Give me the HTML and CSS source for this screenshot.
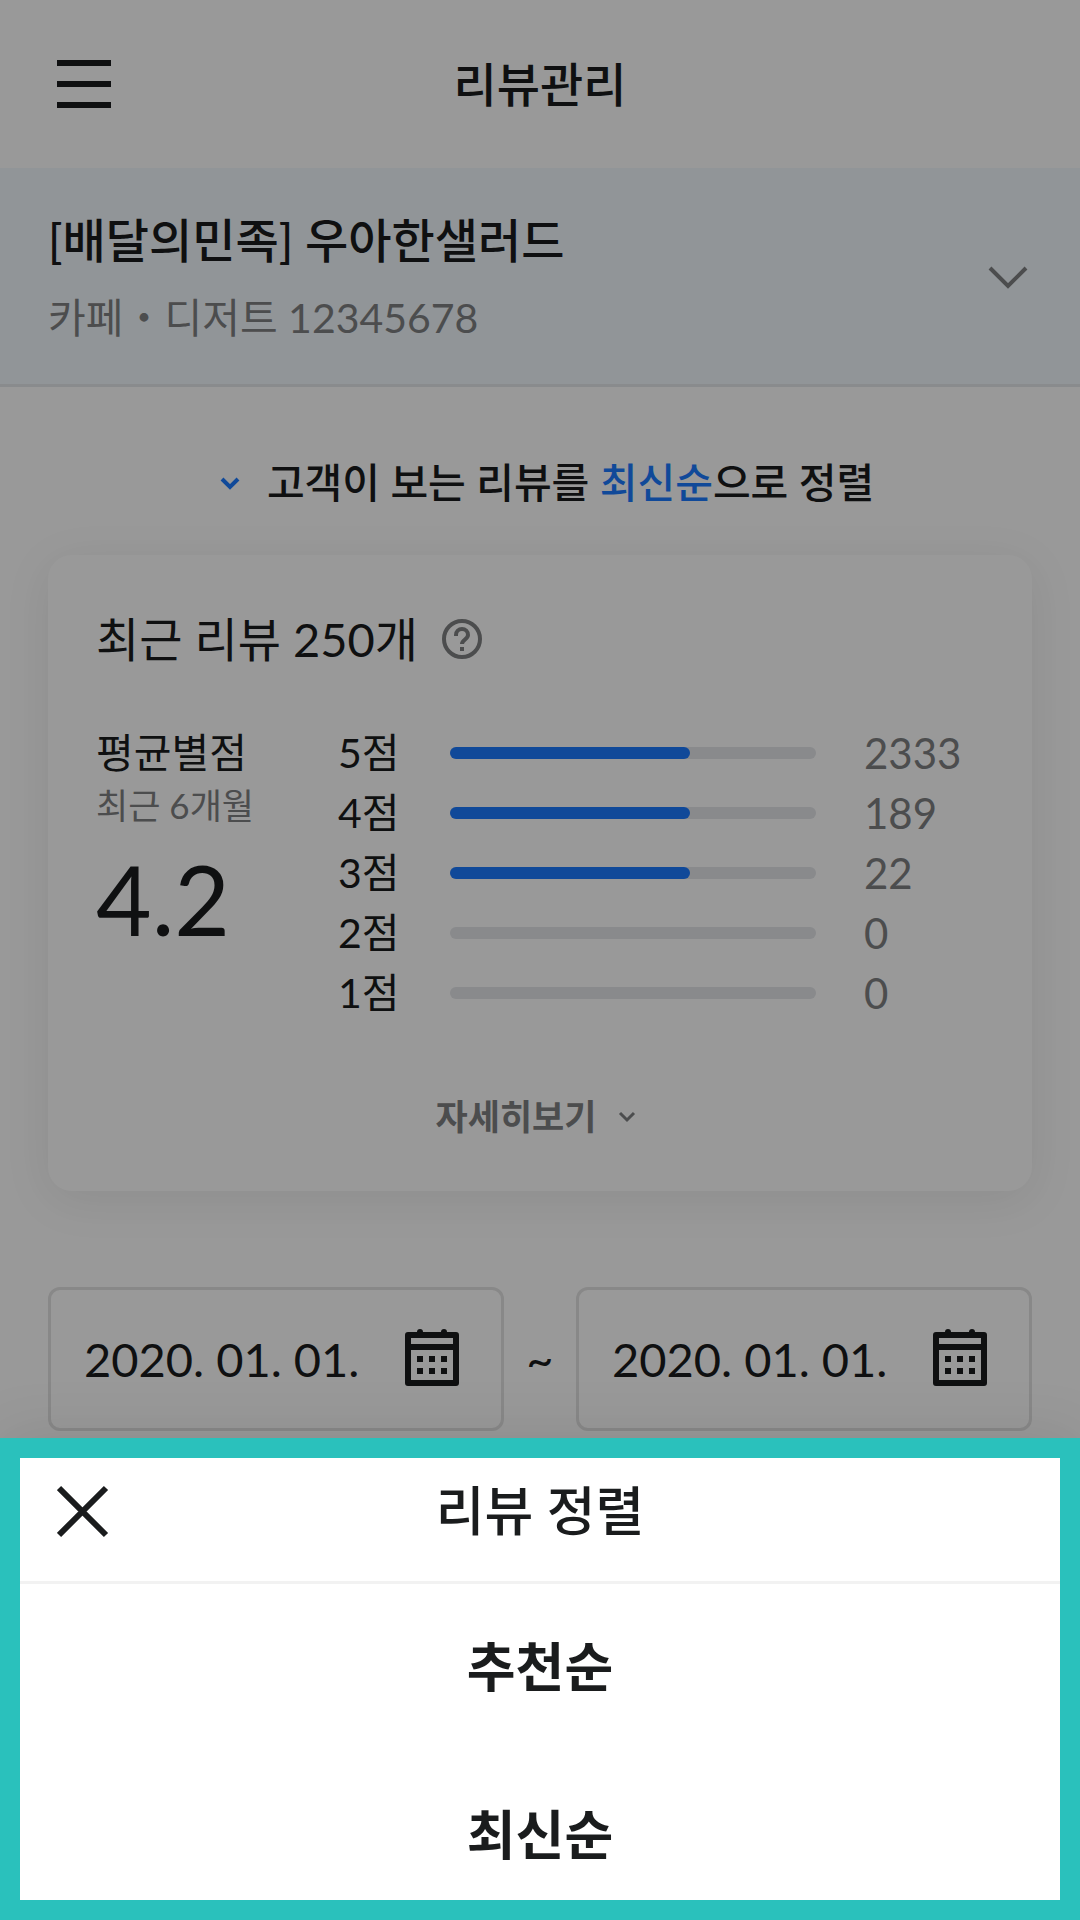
FILE: index.html
```html
<!DOCTYPE html>
<html lang="ko">
<head>
    <meta charset="UTF-8">
    <meta name="viewport" content="width=device-width, initial-scale=1.0">
    <title>리뷰관리</title>
    <link rel="stylesheet" href="styles.css">
</head>
<body>
    <header class="top-bar">
        <button type="button" class="icon-btn" aria-label="메뉴">
            <svg width="54" height="48" viewBox="0 0 54 48" fill="currentColor">
                <path d="M0 0h54v6H0zM0 21h54v6H0zM0 42h54v6H0z"/>
            </svg>
        </button>
        <h1>리뷰관리</h1>
    </header>

    <button type="button" class="store">
        <span class="store-info">
            <span class="store-name">[배달의민족] 우아한샐러드</span>
            <span class="store-sub">카페・디저트 12345678</span>
        </span>
        <svg width="42" height="24" viewBox="0 0 42 24" fill="none" stroke="currentColor" stroke-width="4">
            <path d="M3 3l18 18L39 3"/>
        </svg>
    </button>

    <main>
        <button type="button" class="sort">
            <svg width="48" height="48" viewBox="0 0 48 48" fill="none" stroke="#1c7bff" stroke-width="4">
                <path d="M16 20l8 8 8-8"/>
            </svg>
            <span>고객이 보는 리뷰를 <em>최신순</em>으로 정렬</span>
        </button>

        <section class="card">
            <div class="card-title">
                <h2>최근 리뷰 250개</h2>
                <button type="button" class="icon-btn help" aria-label="도움말">
                    <svg width="40" height="40" viewBox="0 0 40 40" fill="none" stroke="currentColor" stroke-width="4">
                        <circle cx="20" cy="20" r="18"/>
                        <path d="M14 17v-1a6 6 0 0 1 12 0c0 4-6 5-6 9"/>
                        <path d="M18 30h4"/>
                    </svg>
                </button>
            </div>

            <div class="stats">
                <div class="average">
                    <p class="average-label">평균별점</p>
                    <p class="average-period">최근 6개월</p>
                    <p class="average-score">4.2</p>
                </div>
                <ul class="scores">
                    <li><span class="label">5점</span><span class="bar"><span class="fill" style="width: 65.6%"></span></span><span class="count">2333</span></li>
                    <li><span class="label">4점</span><span class="bar"><span class="fill" style="width: 65.6%"></span></span><span class="count">189</span></li>
                    <li><span class="label">3점</span><span class="bar"><span class="fill" style="width: 65.6%"></span></span><span class="count">22</span></li>
                    <li><span class="label">2점</span><span class="bar"></span><span class="count">0</span></li>
                    <li><span class="label">1점</span><span class="bar"></span><span class="count">0</span></li>
                </ul>
            </div>

            <button type="button" class="more">
                자세히보기
                <svg width="36" height="36" viewBox="0 0 36 36" fill="none" stroke="currentColor" stroke-width="3">
                    <path d="M11 15l7 7 7-7"/>
                </svg>
            </button>
        </section>

        <div class="period">
            <div class="date">
                <input type="text" value="2020. 01. 01." aria-label="시작일">
                <button type="button" class="icon-btn" aria-label="시작일 선택">
                    <svg width="54" height="60" viewBox="0 0 54 60" fill="currentColor">
                        <path fill-rule="evenodd" d="M3 3h9a3 3 0 0 1 6 0h18a3 3 0 0 1 6 0h9a3 3 0 0 1 3 3v48a3 3 0 0 1-3 3H3a3 3 0 0 1-3-3V6a3 3 0 0 1 3-3zM6 9v6h42V9zM6 21v30h42V21z"/>
                        <path d="M12 27h6v6h-6zM24 27h6v6h-6zM36 27h6v6h-6zM12 39h6v6h-6zM24 39h6v6h-6zM36 39h6v6h-6z"/>
                    </svg>
                </button>
            </div>
            <span class="tilde">~</span>
            <div class="date">
                <input type="text" value="2020. 01. 01." aria-label="종료일">
                <button type="button" class="icon-btn" aria-label="종료일 선택">
                    <svg width="54" height="60" viewBox="0 0 54 60" fill="currentColor">
                        <path fill-rule="evenodd" d="M3 3h9a3 3 0 0 1 6 0h18a3 3 0 0 1 6 0h9a3 3 0 0 1 3 3v48a3 3 0 0 1-3 3H3a3 3 0 0 1-3-3V6a3 3 0 0 1 3-3zM6 9v6h42V9zM6 21v30h42V21z"/>
                        <path d="M12 27h6v6h-6zM24 27h6v6h-6zM36 27h6v6h-6zM12 39h6v6h-6zM24 39h6v6h-6zM36 39h6v6h-6z"/>
                    </svg>
                </button>
            </div>
        </div>
    </main>

    <div class="dim"></div>

    <!-- Bottom sheet -->
    <section class="sheet" role="dialog" aria-labelledby="sheet-title">
        <div class="sheet-header">
            <button type="button" class="icon-btn" aria-label="닫기">
                <svg width="54" height="54" viewBox="0 0 54 54" fill="none" stroke="currentColor" stroke-width="6">
                    <path d="M2 4l47 47M49 4L2 51"/>
                </svg>
            </button>
            <h2 id="sheet-title">리뷰 정렬</h2>
        </div>
        <button type="button" class="option">추천순</button>
        <button type="button" class="option">최신순</button>
    </section>
</body>
</html>
```

FILE: styles.css
```css
/* General Styles */
* {
    margin: 0;
    padding: 0;
    box-sizing: border-box;
}

body {
    background: #fff;
    color: #1a1c1d;
    font-family: Lato, "Noto Sans CJK KR", sans-serif;
    font-size: 41px;
    line-height: 63px;
    overflow: hidden;
}

button,
input {
    font: inherit;
    color: inherit;
    background: none;
    border: none;
}

button {
    cursor: pointer;
}

svg {
    display: block;
    flex-shrink: 0;
}

ul {
    list-style: none;
}

h1,
h2 {
    font-size: 47px;
    line-height: 72px;
    font-weight: 500;
}

/* Top Bar */
.top-bar,
.sheet-header {
    display: grid;
    grid-template-columns: 54px 1fr 54px;
    align-items: center;
    text-align: center;
    padding: 0 57px;
}

.top-bar {
    height: 168px;
}

/* Store */
.store {
    display: flex;
    justify-content: space-between;
    align-items: center;
    width: 100%;
    padding: 36px 51px 35px 48px;
    background: #f2f8fd;
    border-bottom: 3px solid #e4e8eb;
    color: #7f8182;
    text-align: left;
}

.store-info {
    display: flex;
    flex-direction: column;
    gap: 10px;
}

.store-name {
    font-size: 47px;
    line-height: 72px;
    font-weight: 500;
    color: #1a1c1d;
}

main {
    padding: 64px 48px;
}

/* Sort */
.sort {
    display: flex;
    justify-content: center;
    align-items: center;
    gap: 13px;
    width: 100%;
    font-weight: 500;
}

.sort em {
    font-style: normal;
    color: #1c7bff;
}

/* Summary Card */
.card {
    margin-top: 41px;
    padding: 48px;
    border-radius: 24px;
    box-shadow: 0 9px 48px rgba(0, 0, 0, 0.08);
}

.card-title {
    display: flex;
    align-items: center;
    gap: 24px;
}

.card-title h2 {
    font-weight: 400;
}

.help {
    color: #7f8182;
}

.stats {
    display: flex;
    margin-top: 48px;
    line-height: 60px;
}

.average {
    width: 242px;
}

.average-period {
    font-size: 35px;
    line-height: 44px;
    color: #7f8182;
}

.average-score {
    font-size: 96px;
    line-height: 144px;
}

.scores {
    flex: 1;
}

.scores li {
    display: flex;
    align-items: center;
}

.label {
    width: 112px;
}

.bar {
    flex: 1;
    height: 12px;
    border-radius: 6px;
    background: #e4e6e9;
}

.fill {
    display: block;
    height: 100%;
    border-radius: 6px;
    background: #1c7bff;
}

.count {
    width: 168px;
    padding-left: 48px;
    font-size: 42px;
    color: #7f8182;
}

.more {
    display: flex;
    justify-content: center;
    align-items: center;
    gap: 12px;
    width: 100%;
    margin-top: 66px;
    font-size: 35px;
    line-height: 54px;
    font-weight: 700;
    color: #7f8182;
}

/* Period */
.period {
    display: flex;
    align-items: center;
    margin-top: 96px;
    font-size: 47px;
}

.date {
    flex: 1;
    display: flex;
    align-items: center;
    height: 144px;
    min-width: 0;
    padding: 0 42px 0 33px;
    border: 3px solid #e3e3e3;
    border-radius: 12px;
}

.date input {
    flex: 1;
    min-width: 0;
}

.tilde {
    width: 72px;
    text-align: center;
}

/* Dimmed Background */
.dim {
    position: fixed;
    inset: 0;
    background: rgba(0, 0, 0, 0.4);
}

/* Bottom Sheet */
.sheet {
    position: fixed;
    left: 0;
    right: 0;
    bottom: 0;
    padding-top: 2px;
    background: #fff;
    box-shadow: 0 0 60px rgba(0, 0, 0, 0.1);
}

.sheet::after {
    content: "";
    position: absolute;
    inset: 0;
    border: 20px solid #2ac1bc;
    pointer-events: none;
}

.sheet-header {
    height: 144px;
    border-bottom: 3px solid #f2f2f2;
}

.sheet-header h2 {
    font-size: 53px;
}

.option {
    display: block;
    width: 100%;
    height: 168px;
    padding-bottom: 3px;
    font-size: 53px;
    font-weight: 700;
}
```
